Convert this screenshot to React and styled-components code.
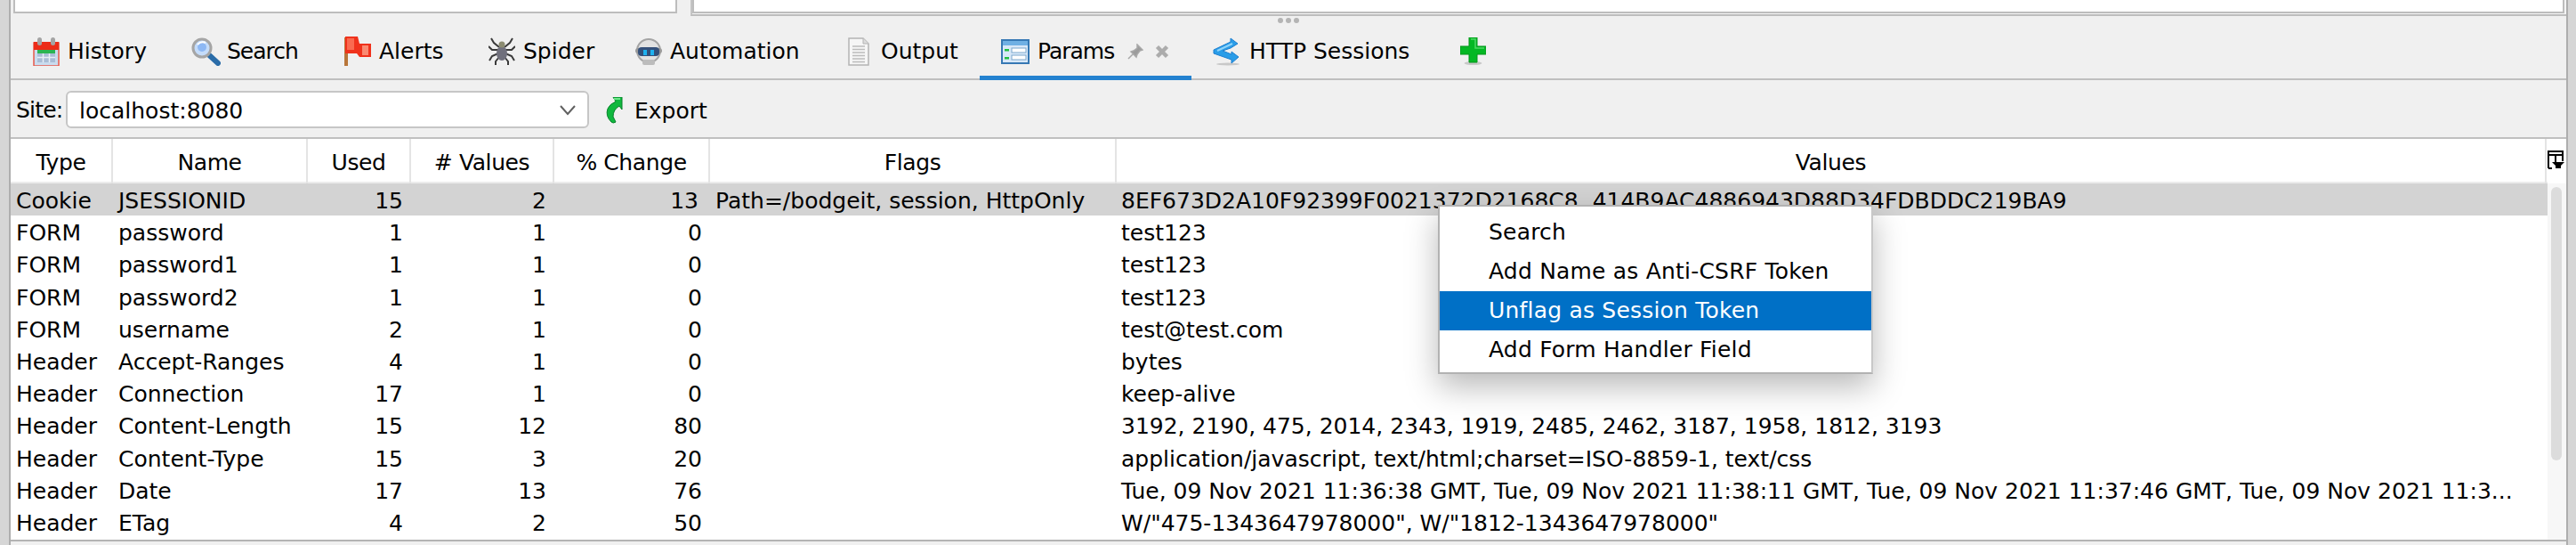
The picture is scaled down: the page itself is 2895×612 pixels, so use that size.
import React from "react";
import styled, { createGlobalStyle } from "styled-components";

const GlobalStyle = createGlobalStyle`
  html, body { margin: 0; padding: 0; background: #f0f0f0; }
  body { font-family: "DejaVu Sans", "Liberation Sans", sans-serif; color: #000; }
`;

const Window = styled.div`
  display: flex;
  width: 2895px;
  height: 612px;
  overflow: hidden;
  position: relative;
`;
const SideStrip = styled.div`
  flex: none;
  width: ${(p) => p.$w}px;
  background: #d6d6d6;
  border-${(p) => p.$side}: 2px solid #aeaeae;
`;
const Main = styled.div`
  flex: 1;
  min-width: 0;
  display: flex;
  flex-direction: column;
`;
const TopPanels = styled.div`
  flex: none;
  height: 18px;
  display: flex;
`;
const LeftPane = styled.div`
  width: 764px;
  padding: 0 15px 3px 3px;
  box-sizing: border-box;
`;
const WhiteBox = styled.div`
  height: 100%;
  background: #fff;
  box-sizing: border-box;
  border: 2px solid #bdbdbd;
  border-top: none;
`;
const RightPane = styled.div`
  flex: 1;
  box-sizing: border-box;
  padding: 0 2px 1px 0;
  border-left: 2px solid #c4c4c4;
  border-bottom: 2px solid #bdbdbd;
  background: #f4f4f4;
`;
const Tabs = styled.div`
  flex: none;
  height: 72px;
  box-sizing: border-box;
  padding-left: 1px;
  display: flex;
  border-bottom: 2px solid #bfbfbf;
  position: relative;
`;
const Tab = styled.div`
  flex: none;
  width: ${(p) => p.$w}px;
  box-sizing: border-box;
  height: 72px;
  padding: 12px 0 0 24px;
  display: flex;
  align-items: center;
  font-size: 25px;
  border-bottom: 5px solid ${(p) => (p.$active ? "#2482d0" : "transparent")};
  white-space: nowrap;
`;
const TabLabel = styled.span`
  margin-left: ${(p) => p.$gap ?? 9}px;
  letter-spacing: ${(p) => p.$ls ?? 0}px;
`;
const GripDots = styled.div`
  position: absolute;
  left: 1424px;
  top: 2px;
  display: flex;
  gap: 3px;
`;
const GripDot = styled.i`
  width: 6px;
  height: 6px;
  border-radius: 50%;
  background: #b4b4b4;
`;
const TabTools = styled.span`
  display: flex;
  align-items: center;
  gap: 13px;
  margin-left: 15px;
`;
const Toolbar = styled.div`
  flex: none;
  height: 66px;
  box-sizing: border-box;
  padding: 12px 0 0 6px;
  display: flex;
  align-items: flex-start;
  border-bottom: 2px solid #c0c0c0;
  font-size: 25px;
`;
const SiteLabel = styled.span`
  line-height: 44px;
  width: 56px;
  letter-spacing: -0.8px;
`;
const Combo = styled.div`
  width: 588px;
  height: 42px;
  box-sizing: border-box;
  padding: 2px 12px 0 13px;
  background: #fff;
  border: 2px solid #c6c6c6;
  border-radius: 6px;
  display: flex;
  align-items: center;
  justify-content: space-between;
`;
const ExportButton = styled.div`
  margin-left: 18px;
  height: 44px;
  display: flex;
  align-items: center;
  gap: 13px;
`;
const TablePane = styled.div`
  flex: 1;
  min-height: 0;
  position: relative;
  display: flex;
  background: #fff;
  border-bottom: 2px solid #b4b4b4;
  margin-bottom: 4px;
`;
const Grid = styled.div`
  flex: 1;
  min-width: 0;
  display: flex;
  flex-direction: column;
`;
const COLUMNS = "115px 219px 116px 161px 175px 457px 1607px";
const HeadRow = styled.div`
  flex: none;
  display: grid;
  grid-template-columns: ${COLUMNS};
  height: 50px;
  box-sizing: border-box;
  border-bottom: 2px solid #ececec;
`;
const HeadCell = styled.div`
  text-align: center;
  line-height: 53px;
  font-size: 25px;
  letter-spacing: -0.4px;
  border-right: 2px solid #e4e4e4;
  box-sizing: border-box;
`;
const Row = styled.div`
  flex: none;
  display: grid;
  grid-template-columns: ${COLUMNS};
  height: 36.2px;
  background: ${(p) => (p.$selected ? "#d3d3d3" : "#fff")};
`;
const Cell = styled.div`
  font-size: 25px;
  line-height: 40px;
  white-space: nowrap;
  overflow: hidden;
  box-sizing: border-box;
  padding: ${(p) => (p.$num ? `0 ${p.$pad ?? 9}px 0 0` : `0 0 0 ${p.$pad ?? 6}px`)};
  text-align: ${(p) => (p.$num ? "right" : "left")};
`;
const ScrollColumn = styled.div`
  flex: none;
  width: 21px;
  background: #f7f7f7;
  position: relative;
`;
const CornerButton = styled.div`
  height: 50px;
  background: #fff;
  display: flex;
  align-items: flex-start;
  padding-top: 13px;
  box-sizing: border-box;
`;
const Thumb = styled.div`
  width: 12px;
  height: 307px;
  margin: 4px 0 0 4px;
  border-radius: 6px;
  background: #dcdcdc;
`;
const Menu = styled.div`
  position: absolute;
  left: 1604px;
  top: 74px;
  width: 489px;
  height: 190px;
  box-sizing: border-box;
  padding-top: 7px;
  background: #fff;
  border: 2px solid #b2b2b2;
  border-right-color: #c8c8c8;
  box-shadow: 0 14px 34px rgba(0, 0, 0, 0.28);
  z-index: 2;
`;
const MenuItem = styled.div`
  height: 44px;
  line-height: 43px;
  padding-left: 55px;
  font-size: 25px;
  letter-spacing: 0.2px;
  color: ${(p) => (p.$active ? "#fff" : "#000")};
  background: ${(p) => (p.$active ? "#0070c6" : "transparent")};
`;

const HistoryIcon = () => (
  <svg width="30" height="32" viewBox="0 0 30 32">
    <rect x="1" y="6" width="28" height="26" fill="#c9dcef" stroke="#e8584a" strokeWidth="1.5" />
    <rect x="1" y="5" width="28" height="9" fill="#ec2c18" />
    <rect x="5" y="14" width="20" height="4" fill="#2bb552" />
    <path d="M5 18h20v10H5z" fill="#a9bdd6" />
    <path d="M11.5 18v10M18.5 18v10M5 22.5h20" stroke="#e9eff7" strokeWidth="1.5" />
    <rect x="5" y="0" width="5" height="9" rx="2.5" fill="#a4a4a4" />
    <rect x="20" y="0" width="5" height="9" rx="2.5" fill="#a4a4a4" />
  </svg>
);
const SearchIcon = () => (
  <svg width="33" height="32" viewBox="0 0 33 32">
    <path d="M18 18l12 11" stroke="#2a6ca8" strokeWidth="6" strokeLinecap="round" />
    <circle cx="12" cy="12" r="10" fill="#c4dcfa" stroke="#a5a5a5" strokeWidth="3" />
    <circle cx="12" cy="11" r="5" fill="#8db8f4" />
    <path d="M7 8q4-4 9-2" stroke="#fff" strokeWidth="2" fill="none" />
  </svg>
);
const FlagIcon = () => (
  <svg width="30" height="33" viewBox="0 0 30 33">
    <rect x="0" y="1" width="4" height="32" fill="#b8763a" />
    <path d="M1 0h14l2 8h13v15H17l-3-4H1z" fill="#f0321c" />
    <path d="M20 10h7v11h-7z" fill="#fa8a72" />
    <path d="M3 2h8v13H3z" fill="#fa6a50" />
  </svg>
);
const SpiderIcon = () => (
  <svg width="30" height="32" viewBox="0 0 30 32">
    <g stroke="#3a3a3a" strokeWidth="2" fill="none">
      <path d="M12 11L6 6 3 1M18 11l6-5 3-5M11 14H4L0 10M19 14h7l4-4M11 18l-7 3-3 5M19 18l7 3 3 5M12 22l-4 5v4M18 22l4 5v4" />
    </g>
    <ellipse cx="15" cy="18" rx="6" ry="8" fill="#70707c" />
    <circle cx="15" cy="8" r="3.5" fill="#8b8b70" />
  </svg>
);
const RobotIcon = () => (
  <svg width="32" height="32" viewBox="0 0 32 32">
    <circle cx="16" cy="15" r="13" fill="#e2e2e2" stroke="#a4a4a4" strokeWidth="2" />
    <rect x="1" y="12" width="30" height="6" rx="3" fill="#9a9a9a" />
    <rect x="4" y="11" width="24" height="10" rx="4" fill="#34507a" />
    <rect x="10" y="14" width="4" height="6" fill="#1fb2f0" />
    <rect x="18" y="14" width="4" height="6" fill="#1fb2f0" />
    <rect x="9" y="25" width="14" height="6" rx="2" fill="#bcbcbc" />
  </svg>
);
const PageIcon = () => (
  <svg width="24" height="32" viewBox="0 0 24 32">
    <path d="M1 1h16l6 6v24H1z" fill="#f6f6f6" stroke="#b4b4b4" strokeWidth="1.5" />
    <path d="M17 1v6h6" fill="#dcdcdc" stroke="#b4b4b4" />
    <path d="M5 10h14M5 13.5h14M5 17h14M5 20.5h14M5 24h14M5 27.5h14" stroke="#bcbcbc" strokeWidth="1.5" />
  </svg>
);
const ParamsIcon = () => (
  <svg width="32" height="28" viewBox="0 0 32 28">
    <rect x="1" y="1" width="30" height="26" fill="#d8e8f8" stroke="#3678b4" strokeWidth="2" />
    <rect x="2" y="2" width="28" height="5" fill="#6fb0e4" />
    <rect x="4" y="11" width="5" height="2.5" fill="#22c040" />
    <rect x="4" y="20" width="5" height="2.5" fill="#22c040" />
    <rect x="12" y="10" width="16" height="5" fill="#fff" stroke="#7aa6cc" />
    <rect x="12" y="18" width="16" height="5" fill="#fff" stroke="#7aa6cc" />
  </svg>
);
const PinIcon = () => (
  <svg width="18" height="18" viewBox="0 0 18 18">
    <path d="M11 1l6 6-3 1-3 4-1 3-6-6 3-1 4-3zM6 12l-5 5" fill="#9c9c9c" stroke="#a8a8a8" strokeWidth="1.5" />
  </svg>
);
const CloseIcon = () => (
  <svg width="16" height="16" viewBox="0 0 16 16">
    <path d="M2.5 2.5l11 11M13.5 2.5l-11 11" stroke="#acacac" strokeWidth="4.5" />
  </svg>
);
const SessionsIcon = () => (
  <svg width="31" height="32" viewBox="0 0 31 32">
    <ellipse cx="17" cy="30" rx="13" ry="1.5" fill="#c8c8c8" />
    <path d="M1 14L20 5V1l8 6-8 5-9 3 10 4v-3l8 6-8 7v-4L1 18z" fill="#2a9de8" stroke="#1d7fd0" />
    <path d="M5 15L22 7" stroke="#8fd4fa" strokeWidth="2" />
  </svg>
);
const PlusIcon = () => (
  <svg width="29" height="31" viewBox="0 0 29 31">
    <ellipse cx="14.5" cy="29" rx="10" ry="2" fill="#c8c8c8" />
    <path d="M10 0h9v10h10v9H19v9h-9v-9H0v-9h10z" fill="#04b824" stroke="#02951a" />
    <path d="M12 2h5v10h10" stroke="#4cd864" strokeWidth="1.5" fill="none" />
  </svg>
);
const ExportIcon = () => (
  <svg width="20" height="30" viewBox="0 0 20 30">
    <path d="M9 0h10v14l-3-4q-7 4-7 12l3 6q-3 2-5 0-7-7-4-15 2-5 9-8z" fill="#10b83e" stroke="#07822a" strokeWidth="1" />
    <path d="M10 2h7" stroke="#6ce888" strokeWidth="2" />
  </svg>
);
const ChevronIcon = () => (
  <svg width="20" height="12" viewBox="0 0 20 12">
    <path d="M2 1l8 9 8-9" fill="none" stroke="#606060" strokeWidth="2" />
  </svg>
);
const ColumnsIcon = () => (
  <svg width="20" height="21" viewBox="0 0 20 21">
    <path d="M1 20V1h16v11M1 5h16M9 5v8M1 20h4" fill="none" stroke="#000" strokeWidth="2" />
    <path d="M5 13h14l-4 4v3h-6v-3z" fill="#000" />
  </svg>
);

const TABS = [
  { label: "History", icon: <HistoryIcon />, w: 178 },
  { label: "Search", icon: <SearchIcon />, w: 172, gap: 7, ls: -1 },
  { label: "Alerts", icon: <FlagIcon />, w: 162 },
  { label: "Spider", icon: <SpiderIcon />, w: 164 },
  { label: "Automation", icon: <RobotIcon />, w: 240, gap: 8 },
  { label: "Output", icon: <PageIcon />, w: 172, gap: 13 },
];

const HEADERS = ["Type", "Name", "Used", "# Values", "% Change", "Flags", "Values"];

const ROWS = [
  ["Cookie", "JSESSIONID", "15", "2", "13", "Path=/bodgeit, session, HttpOnly", "8EF673D2A10F92399F0021372D2168C8, 414B9AC4886943D88D34FDBDDC219BA9"],
  ["FORM", "password", "1", "1", "0", "", "test123"],
  ["FORM", "password1", "1", "1", "0", "", "test123"],
  ["FORM", "password2", "1", "1", "0", "", "test123"],
  ["FORM", "username", "2", "1", "0", "", "test@test.com"],
  ["Header", "Accept-Ranges", "4", "1", "0", "", "bytes"],
  ["Header", "Connection", "17", "1", "0", "", "keep-alive"],
  ["Header", "Content-Length", "15", "12", "80", "", "3192, 2190, 475, 2014, 2343, 1919, 2485, 2462, 3187, 1958, 1812, 3193"],
  ["Header", "Content-Type", "15", "3", "20", "", "application/javascript, text/html;charset=ISO-8859-1, text/css"],
  ["Header", "Date", "17", "13", "76", "", "Tue, 09 Nov 2021 11:36:38 GMT, Tue, 09 Nov 2021 11:38:11 GMT, Tue, 09 Nov 2021 11:37:46 GMT, Tue, 09 Nov 2021 11:3..."],
  ["Header", "ETag", "4", "2", "50", "", 'W/"475-1343647978000", W/"1812-1343647978000"'],
];

const MENU = ["Search", "Add Name as Anti-CSRF Token", "Unflag as Session Token", "Add Form Handler Field"];

export default function App() {
  return (
    <Window>
      <GlobalStyle />
      <SideStrip $w={10} $side="right" />
      <Main>
        <TopPanels>
          <LeftPane>
            <WhiteBox />
          </LeftPane>
          <RightPane>
            <WhiteBox />
          </RightPane>
        </TopPanels>
        <Tabs>
          {TABS.map((t) => (
            <Tab key={t.label} $w={t.w}>
              {t.icon}
              <TabLabel $gap={t.gap} $ls={t.ls}>{t.label}</TabLabel>
            </Tab>
          ))}
          <Tab $w={238} $active>
            <ParamsIcon />
            <TabLabel $ls={-1}>Params</TabLabel>
            <TabTools>
              <PinIcon />
              <CloseIcon />
            </TabTools>
          </Tab>
          <Tab $w={278}>
            <SessionsIcon />
            <TabLabel $gap={10}>HTTP Sessions</TabLabel>
          </Tab>
          <Tab $w={60}>
            <PlusIcon />
          </Tab>
          <GripDots>
            <GripDot />
            <GripDot />
            <GripDot />
          </GripDots>
        </Tabs>
        <Toolbar>
          <SiteLabel>Site:</SiteLabel>
          <Combo>
            localhost:8080
            <ChevronIcon />
          </Combo>
          <ExportButton>
            <ExportIcon />
            Export
          </ExportButton>
        </Toolbar>
        <TablePane>
          <Grid>
            <HeadRow>
              {HEADERS.map((h) => (
                <HeadCell key={h}>{h}</HeadCell>
              ))}
            </HeadRow>
            {ROWS.map((r, i) => (
              <Row key={r[1]} $selected={i === 0}>
                <Cell>{r[0]}</Cell>
                <Cell>{r[1]}</Cell>
                <Cell $num>{r[2]}</Cell>
                <Cell $num>{r[3]}</Cell>
                <Cell $num $pad={i === 0 ? 13 : 9}>{r[4]}</Cell>
                <Cell>{r[5]}</Cell>
                <Cell $pad={5}>{r[6]}</Cell>
              </Row>
            ))}
          </Grid>
          <ScrollColumn>
            <CornerButton>
              <ColumnsIcon />
            </CornerButton>
            <Thumb />
          </ScrollColumn>
          <Menu>
            {MENU.map((m) => (
              <MenuItem key={m} $active={m.startsWith("Unflag")}>
                {m}
              </MenuItem>
            ))}
          </Menu>
        </TablePane>
      </Main>
      <SideStrip $w={9} $side="left" />
    </Window>
  );
}
